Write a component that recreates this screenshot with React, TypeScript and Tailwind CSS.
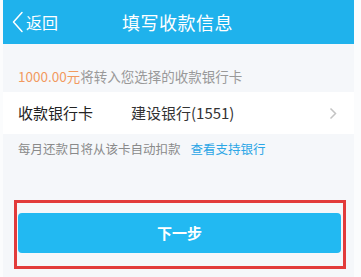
import React from 'react';

const FONT = { fontFamily: '"Noto Sans CJK SC", "Noto Sans", sans-serif' };

export default function App() {
  return (
    <div className="w-[361px] h-[277px] bg-[#fbfcfd] overflow-hidden" style={FONT}>
      <div className="ml-[3px] w-[351px] h-full bg-[#f5f7fa] flex flex-col">
        {/* Header */}
        <div className="h-[44px] bg-[#1fb2ec] flex items-center relative">
          <div className="flex items-center pl-[9px] text-white">
            <svg width="12" height="22" viewBox="0 0 12 22" fill="none">
              <path d="M10 1.5 L1.5 11 L10 20.5" stroke="#fff" strokeWidth="1.5" strokeLinecap="round" strokeLinejoin="round" />
            </svg>
            <span className="text-[16px] leading-none ml-[2px]">返回</span>
          </div>
          <span className="absolute left-[119px] top-[11px] text-white text-[18px] leading-[22px] tracking-[0.5px]">填写收款信息</span>
        </div>

        {/* Amount tip */}
        <div className="pt-[24px] pb-[8px] pl-[15px] text-[13.5px] leading-[16px] text-[#999]">
          <span className="text-[#f29a5f]">1000.00元</span>将转入您选择的收款银行卡
        </div>

        {/* Bank card row */}
        <div className="h-[42px] bg-white flex items-center pl-[15px] pr-[17px]">
          <span className="text-[15px] text-[#222] w-[113px]">收款银行卡</span>
          <span className="text-[15px] text-[#333] flex-1">建设银行(1551)</span>
          <svg width="8" height="13" viewBox="0 0 8 13" fill="none">
            <path d="M1.5 1.5 L6.5 6.5 L1.5 11.5" stroke="#c4c4c4" strokeWidth="1.5" />
          </svg>
        </div>

        {/* Note */}
        <div className="mt-[7px] pl-[15px] text-[12.5px] leading-[16px] text-[#8a8a8a] flex gap-[10px]">
          <span>每月还款日将从该卡自动扣款</span>
          <span className="text-[#2ba6e6]">查看支持银行</span>
        </div>

        {/* Next button with highlight frame */}
        <div className="mt-[43px] ml-[11px] w-[332px] h-[69px] border-[3px] border-[#e23b3b] pt-[10px] pl-[1px]">
          <button className="w-[323px] h-[40px] rounded-[4px] bg-[#22b9f2] text-white text-[15px] font-bold">
            下一步
          </button>
        </div>
      </div>
    </div>
  );
}
